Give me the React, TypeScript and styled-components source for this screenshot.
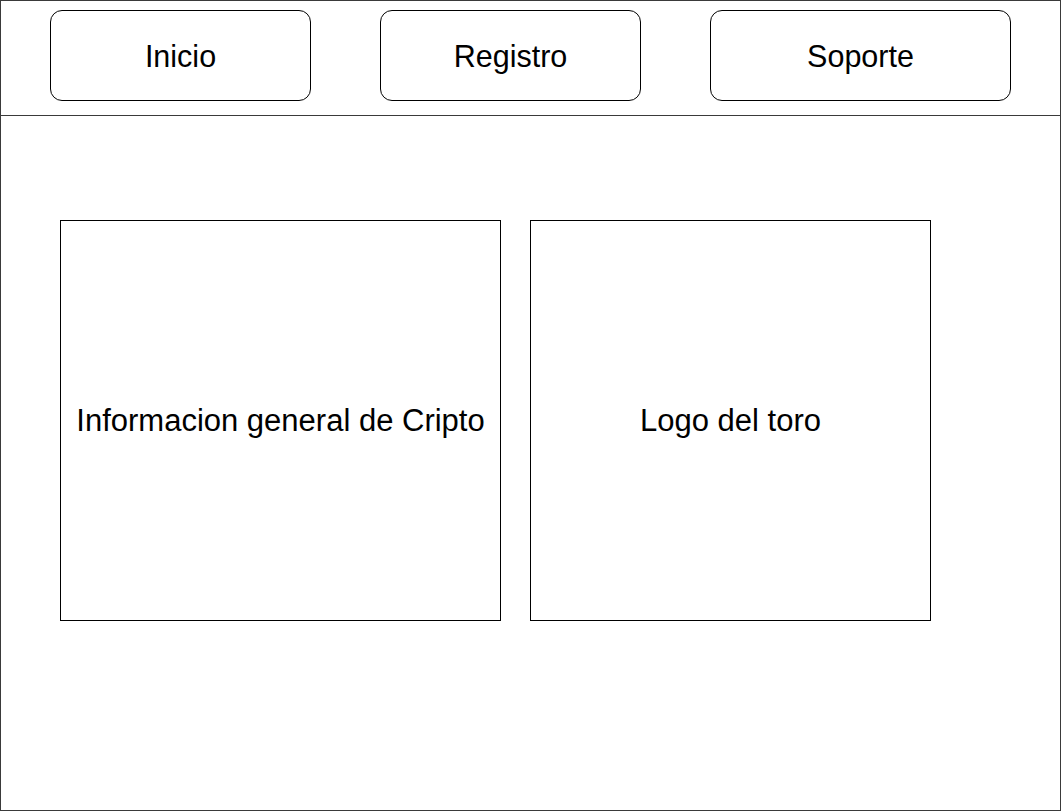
import { createGlobalStyle } from "styled-components";
import styled from "styled-components";

const GlobalStyle = createGlobalStyle`
  html, body {
    margin: 0;
    padding: 0;
    background: #ffffff;
  }
  body {
    font-family: "Liberation Sans", Arial, sans-serif;
    color: #000000;
  }
`;

export default function App() {
  return (
    <>
      <GlobalStyle />
      <Frame>
        <Header>
          <NavButton $width={261}>Inicio</NavButton>
          <NavButton $width={261}>Registro</NavButton>
          <NavButton $width={301}>Soporte</NavButton>
        </Header>
        <Content>
          <Panel $width={441}>Informacion general de Cripto</Panel>
          <Panel $width={401}>Logo del toro</Panel>
        </Content>
      </Frame>
    </>
  );
}

const Frame = styled.div`
  box-sizing: border-box;
  width: 1061px;
  height: 811px;
  border: 1.5px solid #3a3a3a;
  display: flex;
  flex-direction: column;
`;

const Header = styled.div`
  box-sizing: border-box;
  height: 115px;
  border-bottom: 1.5px solid #3a3a3a;
  display: flex;
  align-items: flex-start;
  gap: 69px;
  padding: 9px 0 0 49px;
`;

const NavButton = styled.div<{ $width: number }>`
  box-sizing: border-box;
  width: ${(p) => p.$width}px;
  height: 91px;
  border: 1px solid #000000;
  border-radius: 12px;
  display: flex;
  align-items: center;
  justify-content: center;
  padding-top: 2px;
  font-size: 30.5px;
`;

const Content = styled.div`
  display: flex;
  gap: 29px;
  padding: 104px 0 0 59px;
`;

const Panel = styled.div<{ $width: number }>`
  box-sizing: border-box;
  width: ${(p) => p.$width}px;
  height: 401px;
  border: 1px solid #000000;
  display: flex;
  align-items: center;
  justify-content: center;
  text-align: center;
  font-size: 31px;
`;
